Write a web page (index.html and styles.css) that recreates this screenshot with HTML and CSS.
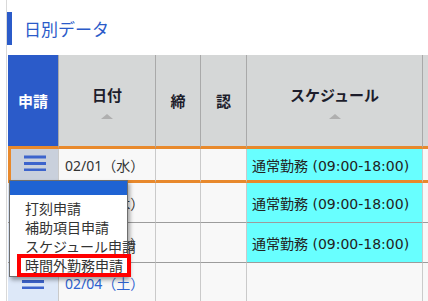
FILE: index.html
```html
<!DOCTYPE html>
<html lang="ja">
<head>
    <meta charset="UTF-8">
    <meta name="viewport" content="width=device-width, initial-scale=1.0">
    <title>日別データ</title>
    <link rel="stylesheet" href="styles.css">
</head>
<body>

<div class="page">
    <h2 class="section-title">日別データ</h2>

    <table class="daily">
        <colgroup>
            <col class="col-apply">
            <col class="col-date">
            <col class="col-close">
            <col class="col-approve">
            <col class="col-schedule">
            <col>
        </colgroup>
        <thead>
            <tr>
                <th class="head-apply">申請</th>
                <th>
                    <div class="sortable"><span>日付</span><i class="sort-up"></i></div>
                </th>
                <th>締</th>
                <th>認</th>
                <th>
                    <div class="sortable"><span>スケジュール</span><i class="sort-up"></i></div>
                </th>
                <th></th>
            </tr>
        </thead>
        <tbody>
            <tr class="current">
                <td class="apply">
                    <button class="menu-btn" type="button">
                        <svg width="24" height="16" viewBox="0 0 24 16"><path d="M1 2h22M1 8.5h22M1 15h22" stroke="#3d64cc" stroke-width="3"/></svg>
                    </button>
                    <ul class="apply-menu">
                        <li class="menu-head"></li>
                        <li>打刻申請</li>
                        <li>補助項目申請</li>
                        <li>スケジュール申請</li>
                        <li><span class="marked">時間外勤務申請</span></li>
                    </ul>
                </td>
                <td class="date">02/01（水）</td>
                <td></td>
                <td></td>
                <td class="schedule">通常勤務 (09:00-18:00)</td>
                <td></td>
            </tr>
            <tr>
                <td class="apply">
                    <button class="menu-btn" type="button">
                        <svg width="24" height="16" viewBox="0 0 24 16"><path d="M1 2h22M1 8.5h22M1 15h22" stroke="#3d64cc" stroke-width="3"/></svg>
                    </button>
                </td>
                <td class="date">02/02（木）</td>
                <td></td>
                <td></td>
                <td class="schedule">通常勤務 (09:00-18:00)</td>
                <td></td>
            </tr>
            <tr>
                <td class="apply">
                    <button class="menu-btn" type="button">
                        <svg width="24" height="16" viewBox="0 0 24 16"><path d="M1 2h22M1 8.5h22M1 15h22" stroke="#3d64cc" stroke-width="3"/></svg>
                    </button>
                </td>
                <td class="date">02/03（金）</td>
                <td></td>
                <td></td>
                <td class="schedule">通常勤務 (09:00-18:00)</td>
                <td></td>
            </tr>
            <tr>
                <td class="apply">
                    <button class="menu-btn" type="button">
                        <svg width="24" height="16" viewBox="0 0 24 16"><path d="M1 2h22M1 8.5h22M1 15h22" stroke="#3d64cc" stroke-width="3"/></svg>
                    </button>
                </td>
                <td class="date sat">02/04（土）</td>
                <td></td>
                <td></td>
                <td></td>
                <td></td>
            </tr>
        </tbody>
    </table>
</div>

</body>
</html>
```

FILE: styles.css
```css
* {
    box-sizing: border-box;
}
body {
    margin: 0;
    background: #fff;
    font-family: "Noto Sans CJK JP", "Noto Sans", sans-serif;
    color: #333;
    overflow: hidden;
}
.page {
    margin-left: 6px;
    border-left: 1px solid #d9d9d9;
    height: 301px;
    overflow: hidden;
}
.section-title {
    margin: 12px 0 10px;
    height: 33px;
    line-height: 33px;
    border-left: 5px solid #2b5bc9;
    padding-left: 12px;
    font-size: 17px;
    font-weight: normal;
    color: #2b5bc9;
}
.daily {
    margin-left: 1px;
    border-collapse: separate;
    border-spacing: 0;
    table-layout: fixed;
    width: 420px;
}
.col-apply { width: 51px; }
.col-date { width: 97px; }
.col-close { width: 45px; }
.col-approve { width: 46px; }
.col-schedule { width: 176px; }

.daily th {
    height: 94px;
    padding: 0;
    background: #d5d7d7;
    border-right: 1px solid #a9a9a9;
    border-bottom: 3px solid #e8892c;
    font-size: 15px;
    font-weight: bold;
    color: #1d1d2b;
    text-align: center;
    vertical-align: middle;
}
.daily th:last-child {
    border-right: none;
}
.daily th.head-apply {
    background: #2b5bc9;
    color: #fff;
}

.sortable {
    display: flex;
    flex-direction: column;
    align-items: center;
    gap: 9px;
    line-height: 20px;
    padding-top: 2px;
}
.sort-up {
    width: 0;
    height: 0;
    border-left: 6px solid transparent;
    border-right: 6px solid transparent;
    border-bottom: 5px solid #afafaf;
}

.daily td {
    height: 40px;
    padding: 0;
    background: #f8f8f8;
    border-right: 1px solid #cacaca;
    border-bottom: 1px solid #9c9c9c;
    font-family: "DejaVu Sans", "Noto Sans CJK JP", sans-serif;
    font-size: 14px;
    vertical-align: middle;
    white-space: nowrap;
}
.daily td:last-child {
    border-right: none;
}
.daily td.apply {
    background: #dde8f8;
    text-align: center;
}
.daily tr.current td {
    height: 34px;
    border-bottom: 3px solid #e8892c;
}
.daily tr.current td.apply {
    position: relative;
    background: #c9d0dc;
    border-left: 3px solid #e8892c;
}
.daily td.date {
    padding-left: 6px;
    font-family: "Noto Sans", "Noto Sans CJK JP", sans-serif;
    color: #333;
}
.daily td.date.sat {
    color: #2f63d0;
}
.daily td.schedule {
    background: #68ffff;
    padding-left: 5px;
    color: #222;
}

.menu-btn {
    border: none;
    background: none;
    padding: 0;
    display: inline-flex;
    cursor: pointer;
}

.apply-menu {
    position: absolute;
    top: 31px;
    left: -2px;
    z-index: 10;
    width: 119px;
    margin: 0;
    padding: 0 0 1px;
    list-style: none;
    background: #fff;
    border: 1px solid #6e6e6e;
    box-shadow: 2px 3px 4px rgba(0, 0, 0, 0.35);
    text-align: left;
    font-family: "Noto Sans CJK JP", sans-serif;
}
.apply-menu li {
    padding-left: 15px;
    line-height: 19px;
    font-size: 14px;
    color: #333;
}
.apply-menu .menu-head {
    height: 14px;
    margin-bottom: 4px;
    background: #1f63d3;
}
.marked {
    display: inline-block;
    margin-left: -4px;
    padding: 0 4px;
    line-height: 15px;
    outline: 4px solid #f00;
}
```
